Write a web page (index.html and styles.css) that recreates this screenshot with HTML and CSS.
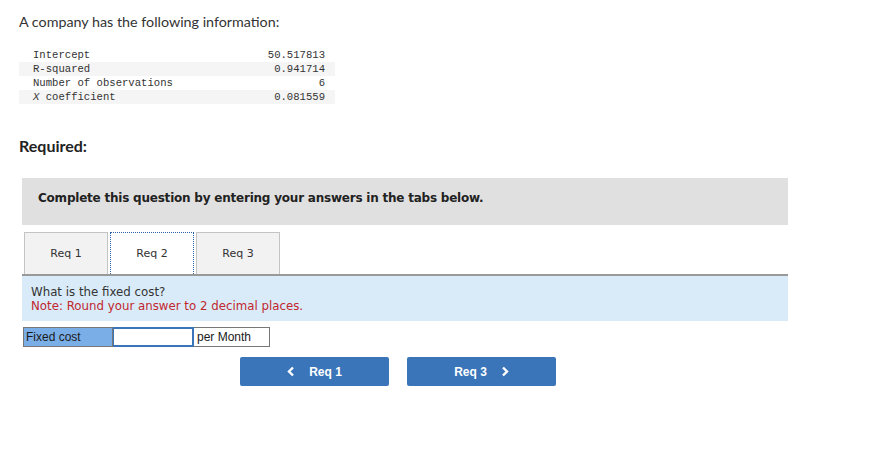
FILE: index.html
```html
<!DOCTYPE html>
<html lang="en">
<head>
    <meta charset="UTF-8">
    <meta name="viewport" content="width=device-width, initial-scale=1.0">
    <title>Fixed cost question</title>
    <link rel="stylesheet" href="styles.css">
</head>
<body>

    <!-- Question text -->
    <p class="intro">A company has the following information:</p>

    <table class="data-table">
        <tr><td>Intercept</td><td class="num">50.517813</td></tr>
        <tr><td>R-squared</td><td class="num">0.941714</td></tr>
        <tr><td>Number of observations</td><td class="num">6</td></tr>
        <tr><td><i>X</i> coefficient</td><td class="num">0.081559</td></tr>
    </table>

    <h3 class="required">Required:</h3>

    <!-- Tabs block -->
    <div class="question-box">
        <div class="instructions">Complete this question by entering your answers in the tabs below.</div>

        <div class="tabs">
            <div class="tab">Req 1</div>
            <div class="tab active">Req 2</div>
            <div class="tab">Req 3</div>
        </div>

        <div class="tab-panel">
            <div>What is the fixed cost?</div>
            <div class="note">Note: Round your answer to 2 decimal places.</div>
        </div>

        <div class="answer-row">
            <div class="label-cell">Fixed cost</div>
            <input type="text" class="answer-input">
            <div class="unit-cell">per Month</div>
        </div>

        <div class="nav-buttons">
            <button class="nav-btn">
                <svg class="chev" width="8" height="11" viewBox="0 0 8 11"><polyline points="6,1.5 2,5.5 6,9.5" fill="none" stroke="white" stroke-width="2.4"/></svg>
                Req 1
            </button>
            <button class="nav-btn">
                Req 3
                <svg class="chev" width="8" height="11" viewBox="0 0 8 11"><polyline points="2,1.5 6,5.5 2,9.5" fill="none" stroke="white" stroke-width="2.4"/></svg>
            </button>
        </div>
    </div>

</body>
</html>
```

FILE: styles.css
```css
body {
    font-family: "Lato", "Open Sans", sans-serif;
    color: #333;
    background: white;
    margin: 0;
    padding: 12px 19px;
}

.intro {
    margin: 0;
    font-size: 14.3px;
    line-height: 20px;
}

.data-table {
    margin: 16px 0 0 0;
    border-collapse: collapse;
    width: 316px;
    font-family: "Liberation Mono", monospace;
    font-size: 10.6px;
    color: #333;
}

.data-table td {
    height: 14px;
    padding: 0 0 0 14px;
    line-height: 14px;
}

.data-table td.num {
    text-align: right;
    padding: 0 10px 0 0;
}

.data-table tr:nth-child(even) {
    background: #f5f5f5;
}

.required {
    margin: 31px 0 0 0;
    font-size: 16px;
    line-height: 22px;
    font-weight: bold;
    color: #222;
}

.question-box {
    margin: 21px 0 0 3px;
    width: 766px;
    font-family: "DejaVu Sans", Verdana, sans-serif;
}

.instructions {
    background: #e0e0e0;
    height: 47px;
    line-height: 40px;
    padding: 0 16px;
    font-size: 12px;
    letter-spacing: -0.22px;
    font-weight: bold;
    color: #222;
}

.tabs {
    display: flex;
    gap: 2px;
    margin-top: 7px;
    padding-left: 2px;
    border-bottom: 2px solid #999;
}

.tab {
    width: 82px;
    height: 41px;
    line-height: 42px;
    text-align: center;
    font-size: 11px;
    background: #f2f2f2;
    border: 1px solid #c4c4c4;
    border-bottom: none;
}

.tab.active {
    background: white;
    border: 1px dotted #2d5fa6;
    border-bottom: none;
}

.tab-panel {
    background: #d9ebf9;
    padding: 9px 9px 8px;
    font-size: 11.8px;
    line-height: 14px;
    color: #333;
}

.note {
    color: #c1272d;
}

.answer-row {
    display: flex;
    margin: 6px 0 0 1px;
    height: 20px;
    font-family: "Liberation Sans", Arial, sans-serif;
    font-size: 12px;
}

.label-cell {
    width: 86px;
    background: #7aaee6;
    border: 1px solid #777;
    padding-left: 2px;
    line-height: 19px;
    color: #1a1a1a;
}

.answer-input {
    width: 81px;
    height: 20px;
    box-sizing: border-box;
    border: 2px solid #3a75b9;
    border-left-width: 1px;
    margin: 0;
    padding: 0;
}

.unit-cell {
    width: 72px;
    border: 1px solid #777;
    border-left: none;
    padding-left: 3px;
    line-height: 19px;
    color: #1a1a1a;
}

.nav-buttons {
    display: flex;
    gap: 18px;
    margin: 10px 0 0 218px;
}

.nav-btn {
    display: flex;
    align-items: center;
    justify-content: center;
    gap: 14px;
    width: 149px;
    height: 29px;
    background: #3a75b9;
    color: white;
    border: none;
    border-radius: 2px;
    font-family: "Liberation Sans", Arial, sans-serif;
    font-size: 12px;
    font-weight: bold;
    cursor: pointer;
}
```
